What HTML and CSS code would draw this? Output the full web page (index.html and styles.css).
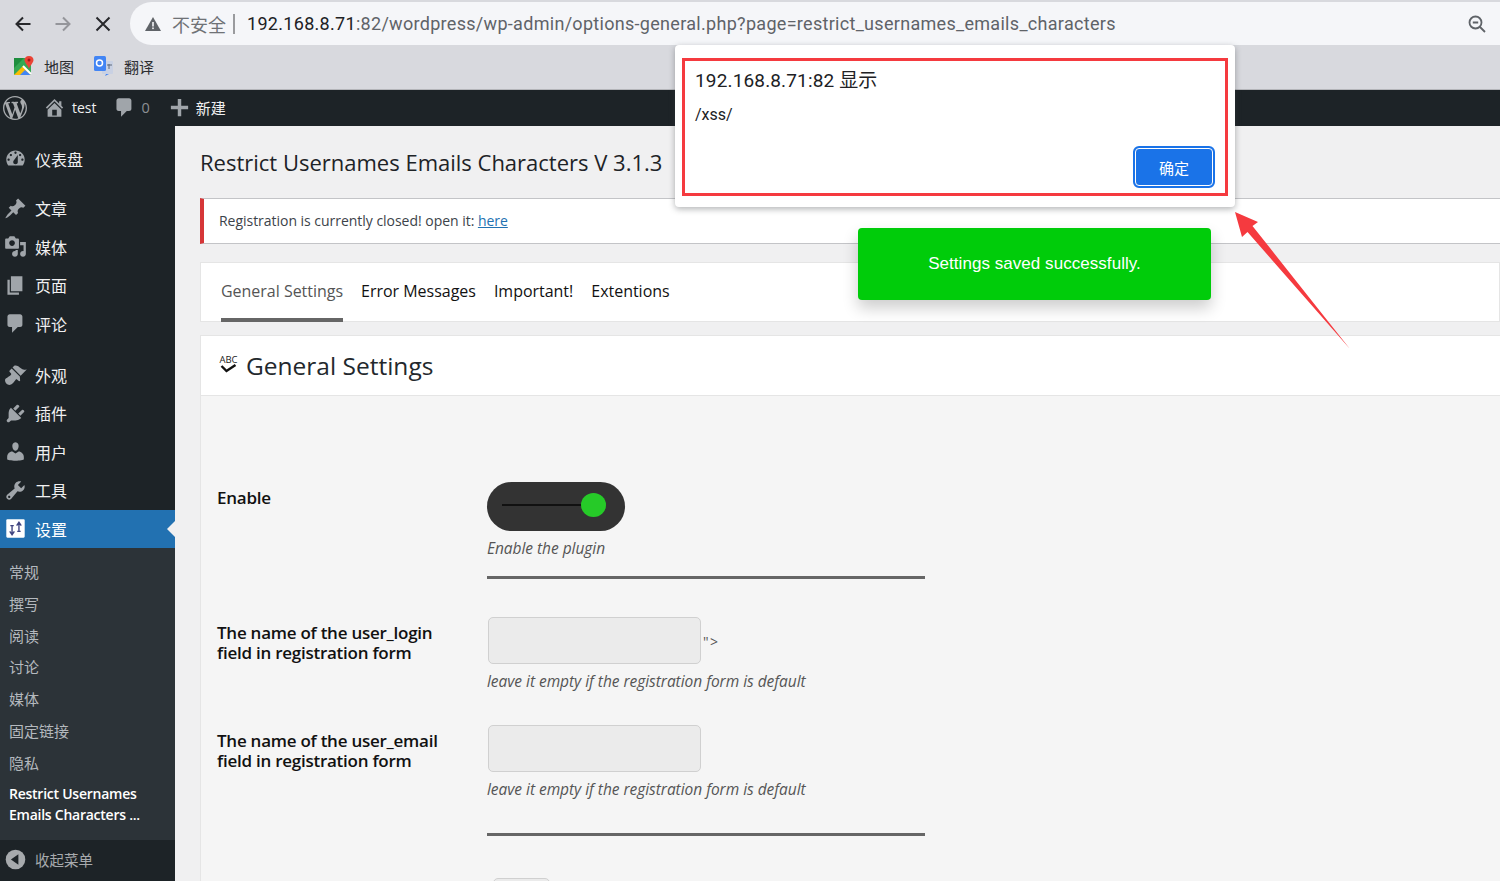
FILE: index.html
```html
<!DOCTYPE html>
<html lang="zh-CN">

<head>
    <meta charset="UTF-8">
    <title>Restrict Usernames Emails Characters</title>
    <link rel="stylesheet" href="styles.css">
</head>

<body>
    <!-- Browser toolbar -->
    <header class="browser">
        <div class="nav-row">
            <div class="nav-buttons">
                <svg class="nav-icon" viewBox="0 0 18 18"><path d="M16.5 9H2.5M9 2.5L2.5 9L9 15.5" /></svg>
                <svg class="nav-icon nav-off" viewBox="0 0 18 18"><path d="M1.5 9H15.5M9 2.5L15.5 9L9 15.5" /></svg>
                <svg class="nav-icon" viewBox="0 0 18 18"><path d="M2.5 2.5L15.5 15.5M15.5 2.5L2.5 15.5" /></svg>
            </div>
            <div class="address-bar">
                <svg class="warn-icon" viewBox="0 0 16 14"><path d="M8 0L16 14H0Z" /><rect class="warn-mark" x="7.2" y="5" width="1.6" height="4.5" /><rect class="warn-mark" x="7.2" y="10.5" width="1.6" height="1.6" /></svg>
                <span class="not-secure">不安全</span>
                <span class="addr-sep"></span>
                <span class="url"><span class="url-host">192.168.8.71</span>:82/wordpress/wp-admin/options-general.php?page=restrict_usernames_emails_characters</span>
                <svg class="zoom-icon" viewBox="0 0 18 18"><circle cx="7.5" cy="7.5" r="6" /><path d="M4.8 7.5H10.2M12 12L17 17" /></svg>
            </div>
        </div>
        <div class="bookmarks">
            <span class="bookmark">
                <svg class="bm-icon" viewBox="0 0 20 20">
                    <rect x="0" y="2" width="17" height="17" rx="1" fill="#35a853" />
                    <path d="M0 19L9 10L17 19Z" fill="#fbbc04" />
                    <path d="M6 19L11 14L17 19Z" fill="#4285f4" />
                    <path d="M0 2H10L0 12Z" fill="#1e8e3e" />
                    <path d="M9 10L17 18" stroke="#fff" stroke-width="2" />
                    <path d="M15 0C12 0 10.500 2 10.500 4C10.500 7 14 9 15 13C16 9 19.500 7 19.500 4C19.500 2 18 0 15 0Z" fill="#ea4335" />
                    <circle cx="15" cy="4" r="1.500" fill="#a31515" />
                </svg>
                地图
            </span>
            <span class="bookmark">
                <svg class="bm-icon" viewBox="0 0 20 20">
                    <rect x="8" y="5" width="11" height="13" rx="1" fill="#c9d1e3" />
                    <path d="M12 18L11 20L15 18Z" fill="#4285f4" />
                    <rect x="0" y="0" width="12" height="15" rx="1.500" fill="#4285f4" />
                    <circle cx="5.500" cy="7" r="3" fill="none" stroke="#fff" stroke-width="1.500" />
                    <path d="M13 9H18M15 8V13" stroke="#5f6b7a" stroke-width="1" />
                </svg>
                翻译
            </span>
        </div>
    </header>

    <!-- WP admin bar -->
    <nav class="adminbar">
        <svg class="wp-logo" viewBox="0 0 20 20"><path d="M20 10c0-5.510-4.490-10-10-10C4.480 0 0 4.490 0 10c0 5.520 4.480 10 10 10 5.510 0 10-4.480 10-10zM7.780 15.370L4.370 6.220c.550-.020 1.170-.080 1.170-.080.500-.060.440-1.130-.060-1.110 0 0-1.450.110-2.370.110-.180 0-.370 0-.580-.010C4.120 2.690 6.870 1.110 10 1.110c2.330 0 4.450.870 6.050 2.340-.680-.110-1.650.390-1.650 1.580 0 .740.450 1.360.900 2.100.350.610.550 1.360.550 2.460 0 1.490-1.400 5-1.400 5l-3.030-8.370c.540-.020.820-.170.820-.170.500-.050.440-1.250-.060-1.220 0 0-1.440.120-2.380.120-.870 0-2.330-.120-2.330-.120-.500-.030-.560 1.200-.060 1.220l.920.080 1.260 3.410zM17.410 10c.240-.640.740-1.870.430-4.250.700 1.290 1.050 2.710 1.050 4.250 0 3.290-1.730 6.240-4.400 7.780.970-2.590 1.940-5.200 2.920-7.780zM6.100 18.090C3.120 16.650 1.110 13.530 1.110 10c0-1.300.230-2.480.720-3.590C3.250 10.300 4.670 14.200 6.100 18.090zm4.030-6.630l2.580 6.980c-.860.290-1.760.450-2.710.450-.790 0-1.570-.110-2.290-.330.810-2.370 1.620-4.730 2.420-7.100z" /></svg>
        <span class="bar-item bar-home">
            <svg class="bar-icon" viewBox="0 0 20 20"><path d="M16 8.500l1.530 1.530-1.060 1.060L10 4.620l-6.470 6.470-1.060-1.060L10 2.500l4 4v-2h2v4zm-6-2.460l6 5.990V18H4v-5.970zM12 17v-5H8v5h4z" /></svg>
            <span class="bar-text">test</span>
        </span>
        <span class="bar-item bar-comments">
            <svg class="bar-icon" viewBox="0 0 20 20"><path d="M5 2h9c1.100 0 2 .9 2 2v7c0 1.100-.9 2-2 2h-2l-5 5v-5H5c-1.100 0-2-.9-2-2V4c0-1.100.9-2 2-2z" /></svg>
            <span class="bar-count">0</span>
        </span>
        <span class="bar-item bar-new">
            <svg class="bar-icon" viewBox="0 0 20 20"><path d="M17.500 8.500v3h-6v6h-3v-6h-6v-3h6v-6h3v6h6z" /></svg>
            <span class="bar-text">新建</span>
        </span>
    </nav>

    <div class="wp-layout">
        <!-- Sidebar -->
        <aside class="sidebar">
            <ul class="menu">
                <li class="menu-item">
                    <svg class="menu-icon" viewBox="0 0 20 20"><path d="M3.760 16h12.480c1.100-1.370 1.760-3.110 1.760-5 0-4.420-3.580-8-8-8s-8 3.580-8 8c0 1.890.66 3.630 1.760 5zM10 4c.55 0 1 .45 1 1s-.45 1-1 1-1-.45-1-1 .45-1 1-1zM6 6c.55 0 1 .45 1 1s-.45 1-1 1-1-.45-1-1 .45-1 1-1zm8 0c.55 0 1 .45 1 1s-.45 1-1 1-1-.45-1-1 .45-1 1-1zm-5.370 5.550L12 7v6c0 1.100-.9 2-2 2s-2-.9-2-2c0-.57.24-1.080.63-1.450zM4 10c.55 0 1 .45 1 1s-.45 1-1 1-1-.45-1-1 .45-1 1-1zm12 0c.55 0 1 .45 1 1s-.45 1-1 1-1-.45-1-1 .45-1 1-1z" fill-rule="evenodd" /></svg>
                    <span class="menu-label">仪表盘</span>
                </li>
                <li class="menu-item menu-gap">
                    <svg class="menu-icon" viewBox="0 0 20 20"><path d="M10.440 3.020l1.820-1.820 6.360 6.350-1.830 1.820c-1.050-.68-2.480-.57-3.410.36l-.75.75c-.92.93-1.040 2.350-.35 3.410l-1.830 1.820-2.410-2.410-2.800 2.790c-.42.42-3.380 2.710-3.800 2.290s1.860-3.390 2.280-3.810l2.790-2.790L4.100 9.360l1.830-1.820c1.050.69 2.480.57 3.400-.36l.75-.75c.93-.92 1.050-2.350.36-3.410z" /></svg>
                    <span class="menu-label">文章</span>
                </li>
                <li class="menu-item">
                    <svg class="menu-icon" viewBox="0 0 20 20"><path d="M13 11V4c0-.55-.45-1-1-1h-1.670L9 1H5L3.670 3H2c-.55 0-1 .45-1 1v7c0 .55.45 1 1 1h10c.55 0 1-.45 1-1zM7 4.500c1.380 0 2.500 1.120 2.500 2.500S8.380 9.500 7 9.500 4.500 8.380 4.500 7 5.620 4.500 7 4.500zM14 6h5v10.500c0 1.380-1.120 2.500-2.500 2.500S14 17.880 14 16.500s1.120-2.500 2.500-2.500c.17 0 .34.02.5.05V9h-3V6zm-4 8.050V13h2v3.500c0 1.380-1.120 2.500-2.500 2.500S7 17.880 7 16.500 8.120 14 9.500 14c.17 0 .34.02.5.05z" /></svg>
                    <span class="menu-label">媒体</span>
                </li>
                <li class="menu-item">
                    <svg class="menu-icon" viewBox="0 0 20 20"><path d="M6 15V2h10v13H6zm-1 1h8v2H3V5h2v11z" /></svg>
                    <span class="menu-label">页面</span>
                </li>
                <li class="menu-item">
                    <svg class="menu-icon" viewBox="0 0 20 20"><path d="M5 2h9c1.100 0 2 .9 2 2v7c0 1.100-.9 2-2 2h-2l-5 5v-5H5c-1.100 0-2-.9-2-2V4c0-1.100.9-2 2-2z" /></svg>
                    <span class="menu-label">评论</span>
                </li>
                <li class="menu-item menu-gap-wide">
                    <svg class="menu-icon" viewBox="0 0 20 20"><path d="M14.480 11.060L7.410 3.990l1.500-1.500c.5-.56 2.300-.47 3.510.32 1.210.8 1.430 1.280 2.910 2.100 1.180.64 2.450 1.260 4.450.85zm-.71.71L6.700 4.700 4.930 6.470c-.39.39-.39 1.020 0 1.410l1.060 1.060c.39.39.39 1.030 0 1.420-.6.6-1.430 1.110-2.210 1.690-.35.26-.7.53-1.010.84C1.430 13.230.91 14.260.89 15.200c-.02.94.4 1.860 1.090 2.640.75.79 1.720 1.270 2.660 1.270 1.010 0 1.970-.42 2.980-1.430.31-.31.58-.66.84-1.010.58-.78 1.090-1.610 1.690-2.210.39-.39 1.030-.39 1.420 0l1.060 1.060c.39.39 1.020.39 1.410 0z" /></svg>
                    <span class="menu-label">外观</span>
                </li>
                <li class="menu-item">
                    <svg class="menu-icon" viewBox="0 0 20 20"><path d="M13.110 4.360L9.870 7.600 8 5.730l3.240-3.240c.35-.34 1.050-.2 1.560.32.52.51.66 1.210.31 1.550zm-8 1.770l.91-1.120 9.010 9.010-1.190.84c-.71.71-2.630 1.160-3.820 1.160H6.140L4.900 17.260c-.59.59-1.540.59-2.120 0-.59-.58-.59-1.530 0-2.120l1.240-1.240v-3.880c0-1.130.4-3.190 1.090-3.890zm7.260 3.970l3.240-3.240c.34-.35 1.040-.21 1.550.31.52.51.66 1.210.31 1.550l-3.240 3.250z" /></svg>
                    <span class="menu-label">插件</span>
                </li>
                <li class="menu-item">
                    <svg class="menu-icon" viewBox="0 0 20 20"><path d="M10 9.250c-2.270 0-2.730-3.440-2.730-3.440C7 4.020 7.820 2 9.970 2c2.160 0 2.980 2.020 2.710 3.810 0 0-.41 3.440-2.680 3.440zm0 2.570L12.720 10c2.390 0 4.520 2.330 4.520 4.530v2.490s-3.650 1.130-7.240 1.130c-3.650 0-7.240-1.130-7.240-1.130v-2.490c0-2.250 1.940-4.480 4.470-4.480z" /></svg>
                    <span class="menu-label">用户</span>
                </li>
                <li class="menu-item">
                    <svg class="menu-icon" viewBox="0 0 20 20"><path d="M16.680 9.770c-1.340 1.340-3.300 1.670-4.950.99l-5.410 6.520c-.99.99-2.590.99-3.580 0s-.99-2.590 0-3.570l6.520-5.420c-.68-1.650-.35-3.610.99-4.950 1.280-1.280 3.120-1.620 4.720-1.060l-2.890 2.890 2.820 2.820 2.860-2.870c.53 1.580.18 3.390-1.080 4.650zM3.810 16.210c.4.39 1.040.39 1.430 0 .4-.4.4-1.040 0-1.430-.39-.4-1.030-.4-1.430 0-.39.39-.39 1.030 0 1.430z" /></svg>
                    <span class="menu-label">工具</span>
                </li>
                <li class="menu-item menu-active">
                    <svg class="menu-icon" viewBox="0 0 20 20"><rect x="2" y="2" width="16" height="16" rx="1" fill="#fff" /><path d="M7 8V15.500M5 12.500L7 15.500L9 12.500M5.500 7.500H8.500M13 12V4.500M11 7.500L13 4.500L15 7.500M11.500 12.500H14.500" fill="none" stroke="#3f4480" stroke-width="1.200" /></svg>
                    <span class="menu-label">设置</span>
                </li>
            </ul>
            <ul class="submenu">
                <li>常规</li>
                <li>撰写</li>
                <li>阅读</li>
                <li>讨论</li>
                <li>媒体</li>
                <li>固定链接</li>
                <li>隐私</li>
                <li class="submenu-current">Restrict Usernames Emails Characters ...</li>
            </ul>
            <div class="collapse">
                <svg class="collapse-icon" viewBox="0 0 20 20"><circle cx="10" cy="10" r="8.500" /><path class="collapse-arrow" d="M12.500 5.500V14.500L6 10Z" /></svg>
                <span>收起菜单</span>
            </div>
        </aside>

        <!-- Main content -->
        <main class="content">
            <h1 class="page-title">Restrict Usernames Emails Characters V 3.1.3</h1>
            <div class="notice">Registration is currently closed! open it: <a href="#">here</a></div>

            <div class="tabs">
                <a class="tab tab-active" href="#">General Settings</a>
                <a class="tab" href="#">Error Messages</a>
                <a class="tab" href="#">Important!</a>
                <a class="tab" href="#">Extentions</a>
            </div>

            <section class="panel">
                <div class="panel-head">
                    <span class="abc-icon">
                        <span class="abc-text">ABC</span>
                        <svg class="abc-check" viewBox="0 0 16 9"><path d="M1 2L6 7L15 1" /></svg>
                    </span>
                    <h2>General Settings</h2>
                </div>
                <div class="panel-body">
                    <div class="field">
                        <label class="field-label">Enable</label>
                        <div>
                            <div class="toggle"><span class="toggle-line"></span><span class="toggle-dot"></span></div>
                            <p class="hint">Enable the plugin</p>
                            <div class="rule rule-first"></div>
                        </div>
                    </div>
                    <div class="field">
                        <label class="field-label">The name of the user_login<br>field in registration form</label>
                        <div>
                            <div class="input-line"><input class="text-input" type="text"><span class="stray">"&gt;</span></div>
                            <p class="hint">leave it empty if the registration form is default</p>
                        </div>
                    </div>
                    <div class="field field-next">
                        <label class="field-label">The name of the user_email<br>field in registration form</label>
                        <div>
                            <div class="input-line"><input class="text-input" type="text"></div>
                            <p class="hint">leave it empty if the registration form is default</p>
                            <div class="rule rule-second"></div>
                        </div>
                    </div>
                    <div class="field field-last">
                        <span></span>
                        <div class="cut-box"></div>
                    </div>
                </div>
            </section>
        </main>
    </div>

    <!-- Overlays: toast, JS alert, annotation arrow -->
    <div class="toast">Settings saved successfully.</div>

    <div class="alert">
        <div class="alert-mark">
            <p class="alert-title">192.168.8.71:82 显示</p>
            <p class="alert-text">/xss/</p>
            <div class="alert-actions"><button class="alert-btn" type="button">确定</button></div>
        </div>
    </div>

    <svg class="arrow" viewBox="0 0 120 140"><path d="M1 1L24 11L18.500 15L116 138L13.500 21L8 26Z" /></svg>
</body>

</html>
```

FILE: styles.css
```css
/* General Reset */
* {
    margin: 0;
    padding: 0;
    box-sizing: border-box;
}

html,
body {
    height: 881px;
    overflow: hidden;
}

body {
    font-family: "Open Sans", "Noto Sans CJK SC", sans-serif;
    background: #f0f0f1;
    color: #3c434a;
    display: flex;
    flex-direction: column;
}

ul {
    list-style: none;
}

/* Browser toolbar */
.browser {
    height: 90px;
    background: #d8d9de;
    border-bottom: 1px solid #b4b5b9;
    padding-top: 2px;
    flex-shrink: 0;
}

.nav-row {
    display: flex;
    height: 43px;
}

.nav-buttons {
    width: 130px;
    display: flex;
    align-items: center;
    padding-left: 14px;
    gap: 22px;
}

.nav-icon {
    width: 18px;
    height: 18px;
    fill: none;
    stroke: #27282b;
    stroke-width: 2;
}

.nav-off {
    stroke: #94959a;
}

.address-bar {
    flex: 1;
    background: #f5f6f9;
    border-radius: 22px 0 0 22px;
    display: flex;
    align-items: center;
    padding-left: 15px;
    font-family: Roboto, "Noto Sans CJK SC", sans-serif;
    font-size: 18px;
    color: #5f6368;
}

.warn-icon {
    width: 16px;
    height: 14px;
    fill: #5f6368;
    margin-right: 11px;
}

.warn-mark {
    fill: #f5f6f9;
}

.not-secure {
    color: #6f7276;
}

.addr-sep {
    width: 2px;
    height: 20px;
    background: #9a9b9e;
    margin: 0 12px 0 7px;
}

.url {
    flex: 1;
    white-space: nowrap;
    letter-spacing: 0.300px;
}

.url-host {
    color: #202124;
}

.zoom-icon {
    width: 18px;
    height: 18px;
    fill: none;
    stroke: #5f6368;
    stroke-width: 1.800;
    margin-right: 14px;
}

.bookmarks {
    display: flex;
    align-items: center;
    height: 44px;
    padding: 0 0 2px 14px;
    gap: 20px;
    font-size: 15px;
    color: #2c2d30;
}

.bookmark {
    display: flex;
    align-items: center;
    gap: 10px;
}

.bm-icon {
    width: 20px;
    height: 20px;
}

/* Admin bar */
.adminbar {
    height: 36px;
    background: #1d2327;
    display: flex;
    align-items: center;
    flex-shrink: 0;
    color: #f0f0f1;
    font-size: 14.500px;
    padding-bottom: 1px;
}

.wp-logo {
    width: 24px;
    height: 24px;
    margin-left: 3px;
    fill: #a7aaad;
}

.bar-item {
    display: flex;
    align-items: center;
}

.bar-icon {
    width: 23px;
    height: 23px;
    fill: #a0a5aa;
}

.bar-home {
    margin-left: 16px;
    font-size: 14px;
}

.bar-home .bar-text {
    margin-left: 6px;
}

.bar-comments {
    margin-left: 16px;
}

.bar-count {
    margin-left: 6px;
    color: #8c8f94;
}

.bar-new {
    margin-left: 18px;
    font-size: 15px;
}

.bar-new .bar-text {
    margin-left: 5px;
}

/* Layout */
.wp-layout {
    display: flex;
    flex: 1;
    min-height: 0;
}

/* Sidebar */
.sidebar {
    width: 175px;
    background: #1d2327;
    flex-shrink: 0;
    color: #f0f0f1;
}

.menu {
    padding-top: 13.500px;
}

.menu-item {
    height: 38.500px;
    display: flex;
    align-items: center;
    padding-left: 4px;
    font-size: 16px;
    position: relative;
}

.menu-gap {
    margin-top: 11px;
}

.menu-gap-wide {
    margin-top: 12.500px;
}

.menu-icon {
    width: 23px;
    height: 23px;
    fill: #a0a5aa;
    margin-right: 8px;
    flex-shrink: 0;
}

.menu-active {
    background: #2271b1;
    color: #fff;
}

.menu-active::after {
    content: "";
    position: absolute;
    right: 0;
    top: 11px;
    border: 8px solid transparent;
    border-right-color: #f0f0f1;
}

.submenu {
    background: #2c3338;
    height: 292px;
    padding-top: 9px;
    font-size: 15px;
    color: #b4b9be;
}

.submenu li {
    padding-left: 9px;
    height: 31.800px;
    line-height: 31.800px;
}

.submenu .submenu-current {
    color: #fff;
    font-weight: 600;
    font-size: 14px;
    line-height: 21px;
    height: 42px;
    padding-top: 3px;
    padding-right: 20px;
    letter-spacing: -0.250px;
}

.collapse {
    display: flex;
    align-items: center;
    height: 41px;
    padding: 0 0 3px 4px;
    font-size: 14.500px;
    color: #a7aaad;
}

.collapse-icon {
    width: 23px;
    height: 23px;
    fill: #a7aaad;
    margin-right: 8px;
}

.collapse-arrow {
    fill: #1d2327;
}

/* Main content */
.content {
    flex: 1;
    min-width: 0;
    padding-left: 25px;
    overflow: hidden;
}

.page-title {
    font-size: 22px;
    font-weight: 400;
    color: #1d2327;
    line-height: 30px;
    margin-top: 21px;
}

.notice {
    height: 46px;
    margin-top: 21px;
    background: #fff;
    border-left: 4px solid #d63638;
    border-bottom: 1px solid #c3c4c7;
    border-top: 1px solid #c3c4c7;
    padding: 0 0 2px 15px;
    display: flex;
    align-items: center;
    white-space: pre-wrap;
    font-size: 14px;
    letter-spacing: -0.030px;
}

.notice a {
    color: #2271b1;
}

.tabs {
    height: 60px;
    margin-top: 18px;
    background: #fff;
    border: 1px solid #e5e5e5;
    display: flex;
    padding-left: 20px;
    gap: 18px;
}

.tab {
    color: #111;
    text-decoration: none;
    font-size: 16px;
    line-height: 56px;
    height: 59px;
    letter-spacing: -0.020px;
}

.tab-active {
    color: #555;
    border-bottom: 4px solid #666;
}

.panel {
    margin-top: 13px;
    border-left: 1px solid #e5e5e5;
}

.panel-head {
    height: 61px;
    background: #fff;
    border-top: 1px solid #e5e5e5;
    border-bottom: 1px solid #e5e5e5;
    display: flex;
    align-items: center;
    padding-left: 18px;
}

.panel-head h2 {
    font-size: 24.500px;
    font-weight: 400;
    color: #23282d;
    margin-left: 8px;
}

.abc-icon {
    display: flex;
    flex-direction: column;
    align-items: center;
    width: 19px;
    margin-bottom: 4px;
}

.abc-text {
    font-size: 9.500px;
    line-height: 9px;
    color: #222;
}

.abc-check {
    width: 17px;
    height: 9px;
    fill: none;
    stroke: #111;
    stroke-width: 2.400;
}

.panel-body {
    background: #f5f5f5;
    padding: 86px 0 0 16px;
    height: 500px;
}

.field {
    display: grid;
    grid-template-columns: 270px 438px;
}

.field-next {
    margin-top: 34px;
}

.field-last {
    margin-top: 42px;
}

.field-label {
    font-size: 17px;
    font-weight: 600;
    color: #111;
    line-height: 20px;
    padding-top: 6px;
    letter-spacing: -0.250px;
}

.toggle {
    width: 138px;
    height: 49px;
    border-radius: 25px;
    background: #333;
    position: relative;
}

.toggle-line {
    position: absolute;
    left: 15px;
    top: 22px;
    width: 80px;
    height: 2px;
    background: #111;
}

.toggle-dot {
    position: absolute;
    left: 94px;
    top: 11px;
    width: 25px;
    height: 24px;
    border-radius: 50%;
    background: #26ca28;
}

.hint {
    font-size: 15.500px;
    font-style: italic;
    color: #555;
    line-height: 20px;
    margin-top: 7px;
    letter-spacing: -0.040px;
}

.rule {
    height: 3px;
    background: #666;
}

.rule-first {
    margin: 18px 0 38px;
}

.rule-second {
    margin-top: 34px;
}

.input-line {
    display: flex;
    align-items: flex-start;
}

.text-input {
    width: 213px;
    height: 47px;
    margin-left: 1px;
    background: #ebebeb;
    border: 1px solid #d0d0d0;
    border-radius: 5px;
}

.stray {
    font-size: 14px;
    color: #555;
    margin: 15px 0 0 2px;
    letter-spacing: 1.500px;
}

.cut-box {
    width: 57px;
    height: 30px;
    margin-left: 6px;
    background: #ebebeb;
    border: 1px solid #d0d0d0;
    border-radius: 5px;
}

/* Overlays */
.toast {
    position: absolute;
    left: 858px;
    top: 228px;
    width: 353px;
    height: 72px;
    background: #00cc0a;
    border-radius: 4px;
    box-shadow: 0 8px 16px rgba(0, 0, 0, 0.2);
    color: #fff;
    font-family: "Liberation Sans", sans-serif;
    font-size: 17px;
    letter-spacing: 0.050px;
    display: flex;
    align-items: center;
    justify-content: center;
}

.alert {
    position: absolute;
    left: 675px;
    top: 45px;
    width: 560px;
    height: 162px;
    background: #fff;
    border-radius: 4px;
    box-shadow: 0 2px 6px rgba(60, 64, 67, 0.4);
    padding: 13px 7px 11px;
}

.alert-mark {
    height: 138px;
    border: 3px solid #f53a3f;
    padding: 7px 9px 5px 10px;
    display: flex;
    flex-direction: column;
    font-family: Roboto, "Noto Sans CJK SC", sans-serif;
    color: #202124;
}

.alert-title {
    font-size: 19px;
    line-height: 26px;
    letter-spacing: 0.150px;
}

.alert-text {
    font-size: 16px;
    line-height: 20px;
    margin-top: 11px;
}

.alert-actions {
    margin-top: auto;
    display: flex;
    justify-content: flex-end;
}

.alert-btn {
    width: 82px;
    height: 42px;
    margin-right: 1px;
    background: #1a73e8;
    border: 2px solid #1a73e8;
    outline: 1px solid #fff;
    outline-offset: -3px;
    border-radius: 6px;
    color: #fff;
    font-family: inherit;
    font-size: 15px;
}

.arrow {
    position: absolute;
    left: 1234px;
    top: 211px;
    width: 120px;
    height: 140px;
    fill: #f53a3f;
}
```
